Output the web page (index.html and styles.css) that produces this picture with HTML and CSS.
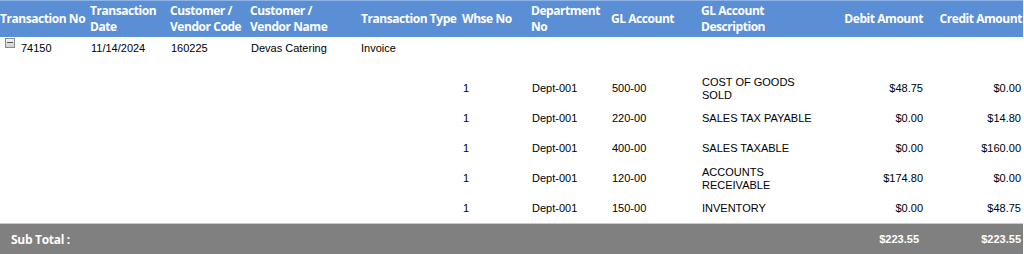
FILE: index.html
```html
<!DOCTYPE html>
<html>
<head>
<meta charset="utf-8">
<link rel="stylesheet" href="styles.css">
</head>
<body>
<table class="grid">
  <colgroup>
    <col class="c1"><col class="c2"><col class="c3"><col class="c4"><col class="c5"><col class="c6"><col class="c7"><col class="c8"><col class="c9"><col class="c10"><col class="c11">
  </colgroup>
  <thead>
    <tr class="head">
      <th class="first">Transaction No</th>
      <th>Transaction<br>Date</th>
      <th>Customer /<br>Vendor Code</th>
      <th>Customer /<br>Vendor Name</th>
      <th class="type">Transaction Type</th>
      <th>Whse No</th>
      <th>Department<br>No</th>
      <th>GL Account</th>
      <th>GL Account<br>Description</th>
      <th class="num">Debit Amount</th>
      <th class="num last">Credit Amount</th>
    </tr>
  </thead>
  <tbody>
    <tr class="master">
      <td class="first"><span class="toggle"></span>74150</td>
      <td>11/14/2024</td>
      <td>160225</td>
      <td>Devas Catering</td>
      <td>Invoice</td>
      <td></td><td></td><td></td><td></td><td></td><td></td>
    </tr>
    <tr class="detail">
      <td></td><td></td><td></td><td></td><td></td>
      <td>1</td><td>Dept-001</td><td>500-00</td><td class="desc">COST OF GOODS SOLD</td><td class="num">$48.75</td><td class="num last">$0.00</td>
    </tr>
    <tr class="detail">
      <td></td><td></td><td></td><td></td><td></td>
      <td>1</td><td>Dept-001</td><td>220-00</td><td class="desc">SALES TAX PAYABLE</td><td class="num">$0.00</td><td class="num last">$14.80</td>
    </tr>
    <tr class="detail">
      <td></td><td></td><td></td><td></td><td></td>
      <td>1</td><td>Dept-001</td><td>400-00</td><td class="desc">SALES TAXABLE</td><td class="num">$0.00</td><td class="num last">$160.00</td>
    </tr>
    <tr class="detail">
      <td></td><td></td><td></td><td></td><td></td>
      <td>1</td><td>Dept-001</td><td>120-00</td><td class="desc">ACCOUNTS RECEIVABLE</td><td class="num">$174.80</td><td class="num last">$0.00</td>
    </tr>
    <tr class="detail">
      <td></td><td></td><td></td><td></td><td></td>
      <td>1</td><td>Dept-001</td><td>150-00</td><td class="desc">INVENTORY</td><td class="num">$0.00</td><td class="num last">$48.75</td>
    </tr>
  </tbody>
  <tfoot>
    <tr class="total">
      <td colspan="9" class="label">Sub Total :</td>
      <td class="num">$223.55</td>
      <td class="num last">$223.55</td>
    </tr>
  </tfoot>
</table>
</body>
</html>
```

FILE: styles.css
```css
html, body {
  margin: 0;
  padding: 0;
  background: #ffffff;
}

.grid {
  width: 1023px;
  border-collapse: collapse;
  table-layout: fixed;
  font-family: "Liberation Sans", Arial, sans-serif;
  font-size: 11px;
  color: #000;
}

.c1 { width: 88px; }
.c2 { width: 80px; }
.c3 { width: 80px; }
.c4 { width: 110px; }
.c5 { width: 102px; }
.c6 { width: 69px; }
.c7 { width: 80px; }
.c8 { width: 90px; }
.c9 { width: 132px; }
.c10 { width: 98px; }
.c11 { width: 94px; }

.head th {
  background: #5a8ed5;
  color: #ffffff;
  font-family: "Open Sans", sans-serif;
  font-weight: 700;
  font-size: 12px;
  letter-spacing: -0.45px;
  line-height: 16px;
  text-align: left;
  vertical-align: middle;
  white-space: nowrap;
  padding: 0 2px;
  height: 36px;
  box-sizing: border-box;
  border-top: 1px solid #8db2e6;
}

.head th.first { padding-left: 0; }
.head th.type { padding-left: 3px; }
.head th.num { text-align: right; padding-right: 6px; }
.head th.last { padding-right: 1px; }

.master td {
  height: 37px;
  box-sizing: border-box;
  vertical-align: top;
  padding: 5px 2px 0 3px;
  line-height: 13px;
}

.master td.first { padding-left: 5px; }

.toggle {
  display: inline-block;
  width: 10px;
  height: 10px;
  box-sizing: border-box;
  border: 1px solid #8c8c8c;
  background: linear-gradient(#f4f4f4, #d0d0d0);
  position: relative;
  vertical-align: top;
  margin: -4px 6px 0 0;
}

.toggle::after {
  content: "";
  position: absolute;
  left: 1px;
  right: 1px;
  top: 3px;
  height: 1px;
  background: #555;
}

.detail td {
  height: 30px;
  box-sizing: border-box;
  vertical-align: middle;
  padding: 0 2px 0 3px;
  line-height: 13px;
}

.detail td.desc { padding-right: 11px; }

td.num {
  text-align: right;
}

.detail td.num { padding-right: 6px; }
.detail td.last { padding-right: 2px; }

.total td {
  background: #808080;
  color: #ffffff;
  height: 31px;
  box-sizing: border-box;
  border-top: 1px solid #c9c9c9;
  font-weight: 700;
  vertical-align: middle;
}

.total td.label {
  font-family: "Open Sans", sans-serif;
  font-size: 12px;
  letter-spacing: -0.3px;
  padding-left: 11px;
}

.total td.num {
  font-family: "Liberation Sans", Arial, sans-serif;
  font-size: 11px;
  padding-right: 10px;
}
.total td.last { padding-right: 2px; }
```
